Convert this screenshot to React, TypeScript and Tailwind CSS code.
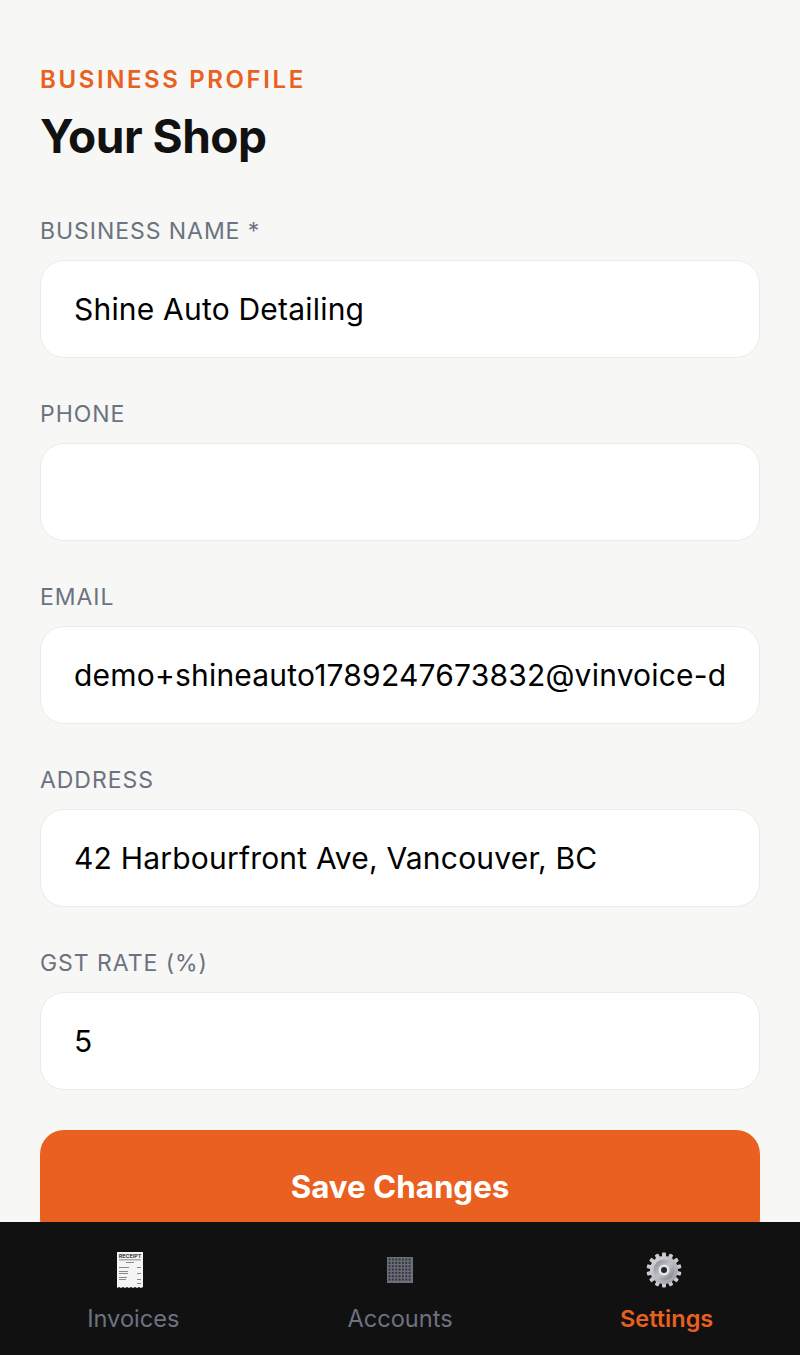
import React from 'react'

const font = "font-['Inter','Liberation_Sans',sans-serif]"

function Field({ label, value }: { label: string; value?: string }) {
  return (
    <div className="mb-[40px]">
      <label className="block mb-[15px] h-[30px] leading-[32px] text-[23px] font-normal tracking-[0.95px] text-[#6b7280]">{label}</label>
      <input
        readOnly
        defaultValue={value}
        className="block w-full h-[98px] rounded-[24px] bg-white border border-[#ebebe8] px-[33px] text-[30px] tracking-[0.2px] text-black outline-none"
      />
    </div>
  )
}

function ReceiptIcon() {
  return (
    <svg width="28" height="36" viewBox="0 0 28 36">
      <path d="M1 0h26v35l-2 1-2-1-2 1-2-1-2 1-2-1-2 1-2-1-2 1-2-1-2 1-2-1-2 1z" fill="#f4f4f4" />
      <text x="14" y="6" textAnchor="middle" fontSize="5.4" fontWeight="700" fill="#444">RECEIPT</text>
      <rect x="3" y="7" width="22" height="1.5" fill="#aaa" />
      <rect x="10" y="10" width="8" height="1" fill="#888" />
      <rect x="3" y="15" width="10" height="1" fill="#888" />
      <rect x="21" y="15" width="4" height="1" fill="#888" />
      <rect x="3" y="19" width="9" height="1" fill="#888" />
      <rect x="3" y="21" width="9" height="1" fill="#888" />
      <rect x="21" y="21" width="4" height="1" fill="#888" />
      <rect x="3" y="25" width="8" height="1" fill="#888" />
      <rect x="3" y="27" width="7" height="1" fill="#888" />
      <rect x="21" y="27" width="4" height="1" fill="#888" />
      <rect x="21" y="31" width="4" height="1" fill="#888" />
    </svg>
  )
}

function GridIcon() {
  const cells = [0, 1, 2, 3, 4, 5, 6]
  return (
    <svg width="26" height="26" viewBox="0 0 26 26">
      <rect width="26" height="26" fill="#6b6f7a" />
      {cells.map((r) =>
        cells.map((c) => (
          <rect key={`${r}-${c}`} x={1.5 + c * 3.35} y={1.5 + r * 3.35} width="2" height="2" fill="#34363d" />
        ))
      )}
    </svg>
  )
}

function GearIcon() {
  const teeth = Array.from({ length: 14 }, (_, i) => (i * 360) / 14)
  return (
    <svg width="36" height="36" viewBox="0 0 36 36">
      <defs>
        <linearGradient id="gearRim" x1="0" y1="0" x2="1" y2="1">
          <stop offset="0" stopColor="#d8dade" />
          <stop offset="1" stopColor="#9a9ca2" />
        </linearGradient>
        <linearGradient id="gearDish" x1="0" y1="0" x2="1" y2="1">
          <stop offset="0" stopColor="#85878d" />
          <stop offset="0.5" stopColor="#bfc1c6" />
          <stop offset="1" stopColor="#77797f" />
        </linearGradient>
      </defs>
      {teeth.map((a) => (
        <rect key={a} x="16" y="0.5" width="4" height="7" rx="1" fill="#c9cbd0" transform={`rotate(${a} 18 18)`} />
      ))}
      <circle cx="18" cy="18" r="14" fill="url(#gearRim)" />
      <circle cx="18" cy="18" r="10.5" fill="url(#gearDish)" />
      <circle cx="18" cy="18" r="5.5" fill="#e4e5e8" />
      <circle cx="18" cy="18" r="3" fill="#26272b" />
    </svg>
  )
}

export default function App() {
  return (
    <div className={`${font} w-[800px] h-[1355px] overflow-hidden bg-[#f7f7f5] flex flex-col`}>
      <div className="flex-1 min-h-0 overflow-hidden px-[40px] pt-[65px]">
        <div className="h-[28px] text-[24px] leading-[30px] font-semibold tracking-[2.6px] text-[#e96020]">BUSINESS PROFILE</div>
        <h1 className="mt-[15px] mb-[51px] text-[46px] leading-[56px] font-bold tracking-[-0.5px] text-[#111111]">Your Shop</h1>
        <Field label="BUSINESS NAME *" value="Shine Auto Detailing" />
        <Field label="PHONE" />
        <Field label="EMAIL" value="demo+shineauto1789247673832@vinvoice-demo.com" />
        <Field label="ADDRESS" value="42 Harbourfront Ave, Vancouver, BC" />
        <Field label="GST RATE (%)" value="5" />
        <button className="block w-full h-[112px] pt-[2px] rounded-[24px] bg-[#e96020] text-white text-[31.3px] font-bold">Save Changes</button>
      </div>
      <nav className="h-[133px] shrink-0 bg-[#111111] flex">
        <div className="flex-1 flex flex-col items-center">
          <div className="h-[82px] flex items-center pt-[13px] pr-[6px]"><ReceiptIcon /></div>
          <span className="text-[23.6px] leading-[30px] font-normal text-[#6b7280]">Invoices</span>
        </div>
        <div className="flex-1 flex flex-col items-center">
          <div className="h-[82px] flex items-center pt-[13px]"><GridIcon /></div>
          <span className="text-[23.6px] leading-[30px] font-normal text-[#6b7280]">Accounts</span>
        </div>
        <div className="flex-1 flex flex-col items-center">
          <div className="h-[82px] flex items-center pt-[13px] pr-[5px]"><GearIcon /></div>
          <span className="text-[23.5px] leading-[30px] font-semibold text-[#e96020]">Settings</span>
        </div>
      </nav>
    </div>
  )
}
